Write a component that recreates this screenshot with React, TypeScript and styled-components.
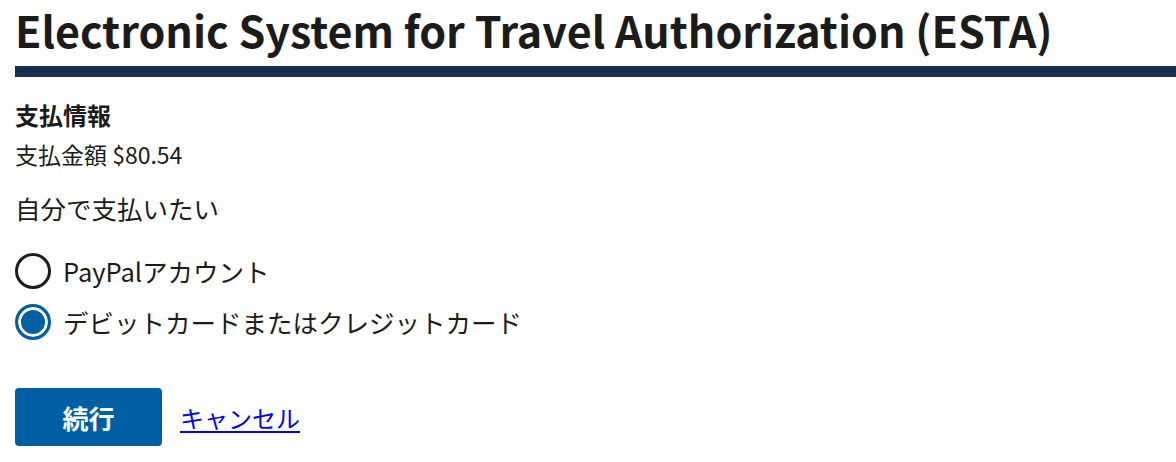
import React, { useState } from "react";
import styled, { createGlobalStyle } from "styled-components";

const Global = createGlobalStyle`
  html, body { margin: 0; padding: 0; background: #fff; overflow: hidden; }
  body { font-family: "Noto Sans CJK JP", "Noto Sans", sans-serif; color: #1b1b1b; }
`;

const Page = styled.div`
  padding: 0 0 0 15px;
`;

const Title = styled.h1`
  margin: 0;
  padding-top: 3px;
  font-size: 43px;
  font-weight: 700;
  line-height: 52px;
`;

const Bar = styled.div`
  height: 11px;
  background: #162e51;
  margin-top: 11px;
`;

const SectionHeading = styled.h2`
  margin: 23px 0 0;
  font-size: 24px;
  font-weight: 700;
  line-height: 30px;
`;

const Amount = styled.p`
  margin: 9px 0 0;
  font-size: 23px;
  line-height: 30px;
`;

const Prompt = styled.p`
  margin: 23px 0 0;
  font-size: 25.5px;
  line-height: 32px;
`;

const RadioList = styled.div`
  margin-top: 29px;
  display: flex;
  flex-direction: column;
  gap: 15px;
`;

const RadioRow = styled.label`
  display: flex;
  align-items: center;
  gap: 12px;
  font-size: 25.5px;
  line-height: 36px;
  cursor: pointer;
`;

const Circle = styled.span<{ $checked: boolean }>`
  box-sizing: border-box;
  width: 36px;
  height: 36px;
  border-radius: 50%;
  border: 3px solid ${(p) => (p.$checked ? "#005ea2" : "#1b1b1b")};
  background: ${(p) => (p.$checked ? "#005ea2" : "#fff")};
  box-shadow: ${(p) => (p.$checked ? "inset 0 0 0 3px #fff" : "none")};
  flex-shrink: 0;
`;

const Actions = styled.div`
  margin-top: 48px;
  display: flex;
  align-items: center;
  gap: 18px;
`;

const Button = styled.button`
  width: 147px;
  height: 58px;
  border: none;
  border-radius: 4px;
  background: #005ea2;
  color: #fff;
  font-family: inherit;
  font-size: 26px;
  font-weight: 700;
  cursor: pointer;
`;

const Link = styled.a`
  color: #0000ee;
  font-size: 24px;
  text-decoration: underline;
  text-underline-offset: 3px;
`;

export default function App() {
  const [choice, setChoice] = useState("card");
  return (
    <>
      <Global />
      <Page>
        <Title>Electronic System for Travel Authorization (ESTA)</Title>
        <Bar />
        <SectionHeading>支払情報</SectionHeading>
        <Amount>支払金額 $80.54</Amount>
        <Prompt>自分で支払いたい</Prompt>
        <RadioList>
          <RadioRow onClick={() => setChoice("paypal")}>
            <Circle $checked={choice === "paypal"} />
            PayPalアカウント
          </RadioRow>
          <RadioRow onClick={() => setChoice("card")}>
            <Circle $checked={choice === "card"} />
            デビットカードまたはクレジットカード
          </RadioRow>
        </RadioList>
        <Actions>
          <Button>続行</Button>
          <Link href="#">キャンセル</Link>
        </Actions>
      </Page>
    </>
  );
}
